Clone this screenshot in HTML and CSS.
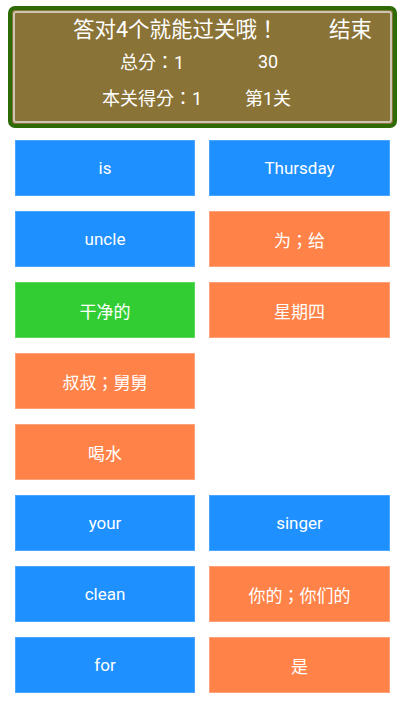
FILE: index.html
```html
<!DOCTYPE html>
<html lang="zh-TW">
<head>
<meta charset="UTF-8">
<meta name="viewport" content="width=device-width, initial-scale=1.0">
<title>单词配对</title>
<link rel="stylesheet" href="styles.css">
</head>
<body>

<div class="board">
  <div class="board-inner">
    <div class="title-row">
      <span class="title">答对4个就能过关哦！</span>
      <span class="end">结束</span>
    </div>
    <div class="stats">
      <span>总分：1</span>
      <span>30</span>
      <span>本关得分：1</span>
      <span>第1关</span>
    </div>
  </div>
</div>

<div class="cards">
  <div class="card blue">is</div>
  <div class="card blue">Thursday</div>
  <div class="card blue">uncle</div>
  <div class="card orange">为；给</div>
  <div class="card green">干净的</div>
  <div class="card orange">星期四</div>
  <div class="card orange">叔叔；舅舅</div>
  <div class="card empty"></div>
  <div class="card orange">喝水</div>
  <div class="card empty"></div>
  <div class="card blue">your</div>
  <div class="card blue">singer</div>
  <div class="card blue">clean</div>
  <div class="card orange">你的；你们的</div>
  <div class="card blue">for</div>
  <div class="card orange">是</div>
</div>

</body>
</html>
```
FILE: styles.css
```css
body {
  margin: 0;
  font-family: Roboto, "Noto Sans CJK TC", sans-serif;
  background-color: #fff;
  color: #fff;
}
.board {
  margin: 6px 8px 0;
  height: 122px;
  box-sizing: border-box;
  border: 4px solid #2e6a06;
  border-radius: 7px;
  background-color: #8a7337;
  padding: 1px;
}
.board-inner {
  height: 100%;
  box-sizing: border-box;
  border: 2px solid #cbc6b4;
  border-radius: 3px;
}
.title-row {
  display: flex;
  justify-content: space-between;
  align-items: center;
  height: 29px;
  padding: 0 18px 2px 58px;
}
.title {
  font-size: 21.5px;
}
.end {
  font-size: 21.5px;
}
.stats {
  display: grid;
  grid-template-columns: 116px 116px;
  grid-auto-rows: 36px;
  align-items: center;
  justify-items: center;
  padding-left: 79px;
  margin-top: -1px;
  font-size: 18px;
}
.cards {
  display: grid;
  grid-template-columns: 180px 181px;
  grid-auto-rows: 56px;
  column-gap: 14px;
  row-gap: 15px;
  padding: 12px 0 0 15px;
}
.card {
  display: flex;
  align-items: center;
  justify-content: center;
  font-size: 17px;
  box-sizing: border-box;
}
.blue {
  background-color: #1e90ff;
  border: 1px solid #4aa6ff;
}
.orange {
  background-color: #ff8348;
  border: 1px solid #ffa27a;
}
.green {
  background-color: #32cd32;
  border: 1px solid #5ad85a;
}
.empty {
  background: none;
}
```
